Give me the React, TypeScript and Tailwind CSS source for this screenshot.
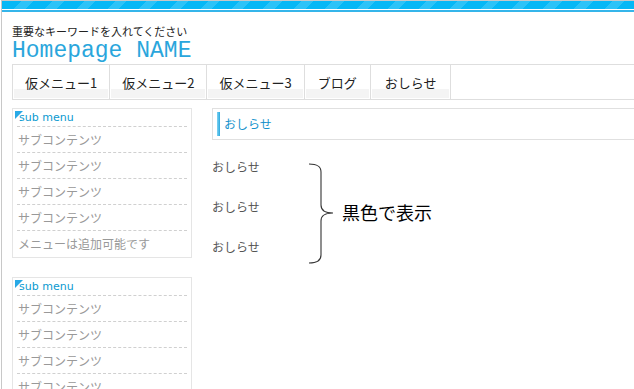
import React from "react";

const jp = "font-['Noto_Sans_CJK_JP','Noto_Sans',sans-serif]";

const navItems = [
  { label: "仮メニュー1", pad: "px-[11px]" },
  { label: "仮メニュー2", pad: "px-[11px]" },
  { label: "仮メニュー3", pad: "px-[11px]" },
  { label: "ブログ", pad: "px-[12px]" },
  { label: "おしらせ", pad: "px-[13px]" },
];

const SubMenu = ({ items }: { items: string[] }) => {
  return (
    <div className="relative w-[180px] border border-[#e5e5e5] bg-white px-[4px]">
      {/* corner mark */}
      <div className="absolute left-[2px] top-[2px] h-0 w-0 border-l-[4px] border-t-[4px] border-l-[#29a9e6] border-t-[#29a9e6] border-r-[4px] border-b-[4px] border-r-transparent border-b-transparent" />
      <p className="h-[18px] border-b border-dashed border-[#d0d0d0] pl-[2px] pt-[2px] font-['DejaVu_Sans',sans-serif] text-[11px] leading-[14px] text-[#0a9ad0]">
        sub menu
      </p>
      {items.map((item, i) => (
        <p
          key={i}
          className={`h-[26px] pl-px text-[12px] leading-[25px] text-[#999] ${jp} ${
            i < items.length - 1 ? "border-b border-dashed border-[#d0d0d0]" : ""
          }`}
        >
          {item}
        </p>
      ))}
    </div>
  );
};

const App = () => {
  return (
    <div className="h-[389px] w-[634px] overflow-hidden bg-white">
      <div className="h-full w-[960px] border-l border-[#c8c8c8] ml-px">
        {/* top bar */}
        <div className="border-t border-[#c8c8c8]">
          <div className="h-[8px] bg-[repeating-linear-gradient(135deg,#06b8f6_0px,#06b8f6_14px,#2cc3f8_14px,#2cc3f8_22px)]" />
          <div className="mt-px h-[2px] bg-[#35b5ea]" />
        </div>

        {/* header */}
        <div className="pl-[10px] pt-[11px]">
          <p className={`text-[11px] leading-[16px] text-[#222] ${jp}`}>重要なキーワードを入れてください</p>
          <h1 className="font-['Liberation_Mono',monospace] text-[23px] leading-[25px] text-[#2aa6dc]">
            Homepage NAME
          </h1>
        </div>

        {/* nav */}
        <div className="ml-[10px] flex border-b border-t border-[#dedede]">
          {navItems.map((item) => (
            <div key={item.label} className="border-l border-[#dedede] p-px">
              <div
                className={`h-[32px] bg-[linear-gradient(#fff_0px,#fff_23px,#f4f4f4_23px)] ${item.pad} pt-[8px] text-[13px] leading-[18px] text-[#222] ${jp}`}
              >
                {item.label}
              </div>
            </div>
          ))}
          <div className="border-l border-[#dedede]" />
        </div>

        {/* body */}
        <div className="ml-[10px] mt-[8px] flex gap-[20px]">
          <div className="flex flex-col gap-[19px]">
            <SubMenu items={["サブコンテンツ", "サブコンテンツ", "サブコンテンツ", "サブコンテンツ", "メニューは追加可能です"]} />
            <SubMenu items={["サブコンテンツ", "サブコンテンツ", "サブコンテンツ", "サブコンテンツ"]} />
          </div>

          <div className="flex-1">
            <div className="flex h-[32px] items-center border border-[#e0e0e0] pl-[4px]">
              <div className="h-[24px] w-[3px] bg-[linear-gradient(90deg,#7fd3f3,#2aa8de)]" />
              <h2 className={`ml-[4px] text-[12px] text-[#1592cc] ${jp}`}>おしらせ</h2>
            </div>

            <div className="mt-[18px] flex items-start">
              <ul className={`flex w-[48px] flex-col gap-[22px] text-[12px] leading-[18px] text-[#555] ${jp}`}>
                <li>おしらせ</li>
                <li>おしらせ</li>
                <li>おしらせ</li>
              </ul>
              <svg width="34" height="101" viewBox="0 0 34 101" className="ml-[48px] mt-[5px]">
                <path
                  d="M1 1 C9 1 13 3 13 9 L13 42 C13 47 16 50 25 50 C16 50 13 53 13 58 L13 92 C13 98 9 100 1 100"
                  fill="none"
                  stroke="#333"
                  strokeWidth="1.1"
                />
              </svg>
              <p className={`mt-[42px] text-[18px] leading-[24px] text-black ${jp}`}>黒色で表示</p>
            </div>
          </div>
        </div>
      </div>
    </div>
  );
};

export default App;
